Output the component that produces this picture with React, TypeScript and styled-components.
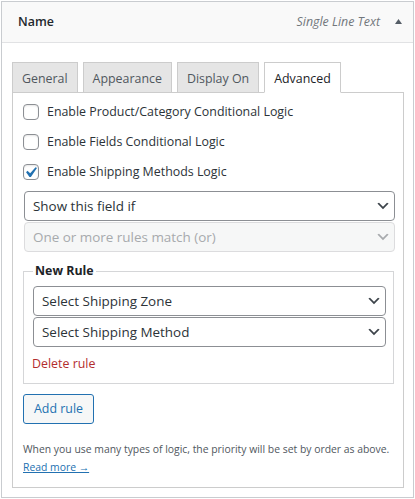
import React from "react";
import styled, { createGlobalStyle } from "styled-components";

const GlobalStyle = createGlobalStyle`
  html, body { margin: 0; padding: 0; background: #fff; }
  body {
    padding: 1px 0 0 1px;
    font-family: "Open Sans", "Noto Sans", sans-serif;
    font-size: 12.4px;
    color: #2c3338;
  }
  * { box-sizing: border-box; }
`;

const Card = styled.div`
  width: 413px;
  border: 1px solid #c9ccd0;
  background: #fff;
`;

const Header = styled.div`
  height: 41px;
  display: flex;
  align-items: center;
  padding: 0 11px 0 16px;
  background: #f9f9f9;
  border-bottom: 1px solid #e1e2e4;
`;

const Title = styled.div`
  flex: 1;
  font-weight: 600;
  color: #23282d;
  line-height: 18px;
`;

const TypeLabel = styled.span`
  font-style: italic;
  color: #72777c;
  line-height: 18px;
  margin-right: 15px;
`;

const Toggle = styled.svg`
  width: 7px;
  height: 5px;
  display: block;
  margin-top: -2px;
`;

const Body = styled.div`
  padding: 19px 9px 9px 10px;
`;

const Tabs = styled.div`
  display: flex;
  gap: 5px;
  margin-bottom: -1px;
  position: relative;
  z-index: 1;
`;

const Tab = styled.div<{ $active?: boolean }>`
  height: 31px;
  padding: 2px 9px 0;
  display: flex;
  align-items: center;
  border: 1px solid #ccc;
  border-bottom-color: ${(p) => (p.$active ? "#fff" : "#ccc")};
  background: ${(p) => (p.$active ? "#fff" : "#e5e5e5")};
  color: ${(p) => (p.$active ? "#1d2327" : "#50575e")};
  line-height: 18px;
`;

const Panel = styled.div`
  border: 1px solid #ccc;
  padding: 4px 9px 11px 10px;
`;

const CheckRow = styled.label`
  height: 30px;
  display: flex;
  align-items: center;
  gap: 8px;
  line-height: 18px;
`;

const Box = styled.span`
  position: relative;
  width: 16px;
  height: 16px;
  flex: none;
  border: 1px solid #8c8f94;
  border-radius: 4px;
  background: #fff;
  box-shadow: inset 0 1px 2px rgba(0, 0, 0, 0.1);
`;

const Check = styled.svg`
  position: absolute;
  left: -4px;
  top: -3px;
  width: 21px;
  height: 21px;
`;

const Select = styled.div<{ $disabled?: boolean }>`
  height: 30px;
  margin: 0 -1px 0 1px;
  padding: 0 8px;
  display: flex;
  align-items: center;
  justify-content: space-between;
  border: 1px solid ${(p) => (p.$disabled ? "#dcdcde" : "#8c8f94")};
  border-radius: 4px;
  background: ${(p) => (p.$disabled ? "#f6f7f7" : "#fff")};
  color: ${(p) => (p.$disabled ? "#a7aaad" : "#2c3338")};
  font-size: 13.45px;
  line-height: 20px;
`;

const SelectStack = styled.div`
  display: flex;
  flex-direction: column;
  gap: 1px;
  margin-top: 4px;
`;

const Chevron = styled.svg`
  width: 16px;
  height: 16px;
  margin-right: -5px;
  flex: none;
`;

const Rule = styled.fieldset`
  margin: 10px 0 0;
  padding: 6px 7px 10px 9px;
  border: 1px solid #d5d6d8;
  min-width: 0;
`;

const RuleLegend = styled.legend`
  padding: 0 2px;
  font-weight: 700;
  line-height: 18px;
  color: #1d2327;
`;

const RuleSelects = styled.div`
  display: flex;
  flex-direction: column;
  gap: 1px;
  & > div {
    margin: 0;
  }
`;

const DeleteLink = styled.div`
  margin: 8px 0 0 -1px;
  line-height: 18px;
  color: #b32d2e;
`;

const Button = styled.button`
  margin-top: 10px;
  height: 30px;
  padding: 0 10px;
  border: 1px solid #2271b1;
  border-radius: 3px;
  background: #f6f7f7;
  color: #2271b1;
  font-family: inherit;
  font-size: 12.4px;
  line-height: 18px;
  cursor: pointer;
`;

const Help = styled.p`
  margin: 16px 0 0;
  font-size: 10.4px;
  line-height: 18px;
  color: #50575e;
`;

const ReadMore = styled.a`
  display: inline-block;
  font-size: 10.4px;
  line-height: 18px;
  color: #2271b1;
  text-decoration: underline;
`;

const ChevronIcon = ({ color }: { color: string }) => (
  <Chevron viewBox="0 0 20 20">
    <path d="M5 6l5 5 5-5 2 1-7 7-7-7 2-1z" fill={color} />
  </Chevron>
);

const Checkbox = ({ checked }: { checked?: boolean }) => (
  <Box>
    {checked && (
      <Check viewBox="0 0 20 20">
        <path
          d="M14.83 4.89l1.34.94-5.81 8.38H9.02L5.78 9.67l1.34-1.25 2.57 2.4z"
          fill="#2271b1"
        />
      </Check>
    )}
  </Box>
);

const tabs = ["General", "Appearance", "Display On", "Advanced"];
const checks: [string, boolean][] = [
  ["Enable Product/Category Conditional Logic", false],
  ["Enable Fields Conditional Logic", false],
  ["Enable Shipping Methods Logic", true],
];

export default function App() {
  return (
    <>
      <GlobalStyle />
      <Card>
        <Header>
          <Title>Name</Title>
          <TypeLabel>Single Line Text</TypeLabel>
          <Toggle viewBox="0 0 7 5">
            <polygon points="3.5,0 7,5 0,5" fill="#555d66" />
          </Toggle>
        </Header>
        <Body>
          <Tabs>
            {tabs.map((t) => (
              <Tab key={t} $active={t === "Advanced"}>
                {t}
              </Tab>
            ))}
          </Tabs>
          <Panel>
            {checks.map(([label, checked]) => (
              <CheckRow key={label}>
                <Checkbox checked={checked} />
                {label}
              </CheckRow>
            ))}
            <SelectStack>
              <Select>
                Show this field if
                <ChevronIcon color="#3c434a" />
              </Select>
              <Select $disabled>
                One or more rules match (or)
                <ChevronIcon color="#a7aaad" />
              </Select>
            </SelectStack>
            <Rule>
              <RuleLegend>New Rule</RuleLegend>
              <RuleSelects>
                <Select>
                  Select Shipping Zone
                  <ChevronIcon color="#3c434a" />
                </Select>
                <Select>
                  Select Shipping Method
                  <ChevronIcon color="#3c434a" />
                </Select>
              </RuleSelects>
              <DeleteLink>Delete rule</DeleteLink>
            </Rule>
            <Button>Add rule</Button>
            <Help>When you use many types of logic, the priority will be set by order as above.</Help>
            <ReadMore href="#">Read more →</ReadMore>
          </Panel>
        </Body>
      </Card>
    </>
  );
}
